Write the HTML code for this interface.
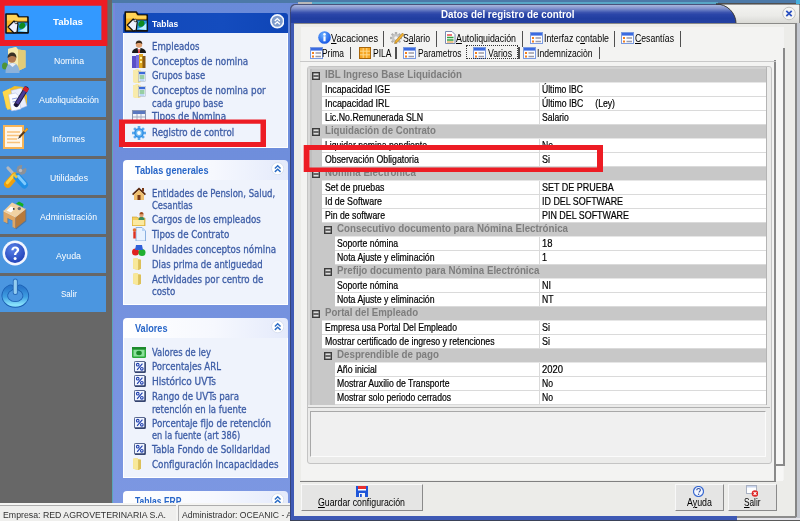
<!DOCTYPE html>
<html lang="es"><head><meta charset="utf-8"><title>Datos del registro de control</title><style>
html,body{margin:0;padding:0;background:#666;}
#root{filter:blur(.6px);position:relative;width:800px;height:521px;overflow:hidden;background:#666;font-family:"Liberation Sans","DejaVu Sans",sans-serif;}
#root div,#root svg{position:absolute;}
.t{position:absolute;white-space:pre;line-height:20px;height:20px;color:#000;transform-origin:0 50%;}
.lk{color:#3d5da6;-webkit-text-stroke:.3px #3d5da6;font-family:"DejaVu Sans","Liberation Sans",sans-serif;}
.sb{color:#fff;}
.st{color:#303030;}
.gr{color:#000;-webkit-text-stroke:.2px #000;}
.cat{color:#7d7d7d;font-weight:bold;}
.pbtn{background:#e6e6e6;border:1px solid;border-color:#f8f8f8 #8a8a8a #8a8a8a #f8f8f8;box-sizing:border-box;}
</style></head><body><div id="root">
<div style="left:0px;top:0px;width:112px;height:504px;background:#676767;"></div>
<div style="left:0px;top:3px;width:106px;height:37px;background:#3399ff;"></div>
<div style="left:0px;top:42px;width:106px;height:36px;background:#4b96e0;"></div>
<div style="left:0px;top:81px;width:106px;height:36px;background:#4b96e0;"></div>
<div style="left:0px;top:120px;width:106px;height:36px;background:#4b96e0;"></div>
<div style="left:0px;top:159px;width:106px;height:36px;background:#4b96e0;"></div>
<div style="left:0px;top:198px;width:106px;height:36px;background:#4b96e0;"></div>
<div style="left:0px;top:237px;width:106px;height:36px;background:#4b96e0;"></div>
<div style="left:0px;top:276px;width:106px;height:36px;background:#4b96e0;"></div>
<svg style="left:4.5px;top:12.5px" width="24" height="21" viewBox="0 0 24 21"><path d="M1 1h11l2 3h9v16H1z" fill="#f8b62a" stroke="#111" stroke-width="1.6" stroke-linejoin="round"/><path d="M2 2h9l1.5 2.5H22v3H2z" fill="#ffd457"/><rect x="12" y="9" width="11" height="10.5" fill="#2a9be0" stroke="#111" stroke-width="1"/><path d="M13 18c3-1 6-2 9-6v7z" fill="#bfefff"/><path d="M14 14c0-3 2-4.5 3.5-4.5S21 11 20 13.5 15 17 14 14z" fill="#0f8a1e"/><path d="M3 14l6-6 4 3-1 8-3 1z" fill="#eef0ff" stroke="#111" stroke-width="1.2" stroke-linejoin="round"/><circle cx="11" cy="9.5" r="1.3" fill="#ddd" stroke="#111" stroke-width=".6"/></svg>
<svg style="left:2px;top:46px" width="26" height="28" viewBox="0 0 26 28"><path d="M6 3l8-2 2 2.500 7.500 1v17l-7.500 3.500L6 22z" fill="#efdc92"/><path d="M6 3l8-2 2 2.500V25L6 22z" fill="#f6eaae"/><path d="M16 3.500l7.500 1v17L16 25z" fill="#e3cc78"/><ellipse cx="2.800" cy="20" rx="2.800" ry="3.600" fill="#4f9436"/><path d="M3.500 27c0-6 2.500-10 7-10s7 4 7 10z" fill="#8db2da"/><path d="M7 18l3.500 3 3.500-3-3.500-1z" fill="#e8eef8"/><circle cx="10" cy="12.500" r="4.200" fill="#b47a52"/><path d="M5.600 12c0-4 2.300-5.500 4.600-5.500s4.600 2 4.200 5.500c-1.500-2.500-5.500-3-8.800 0z" fill="#3a3024"/></svg>
<svg style="left:2px;top:85px" width="28" height="27" viewBox="0 0 28 27"><path d="M1 6.500L9 3l3.500-2 8.500 1 4 9v9L9 25l-5-2z" fill="#f2bd24"/><path d="M.500 7L8 3.500l4 18.500-6.500 3z" fill="#ffd84d"/><path d="M9 5.500l10.500-2.500L25 21l-11.500 4.500z" fill="#e9eefc" stroke="#aab6e2" stroke-width=".5"/><path d="M6.500 9.500l7-1.500 3 2.500L19 24l-9.500 2z" fill="#fbfcff" stroke="#aab6e2" stroke-width=".5"/><path d="M10 14l5-1M10.500 17l5-1M11 20l5-1" stroke="#8fa2e0" stroke-width="1"/><path d="M24 4L14.500 19.500" stroke="#1f1a40" stroke-width="5" stroke-linecap="round"/><path d="M24 4L15 18.500" stroke="#4a3c96" stroke-width="3.200" stroke-linecap="round"/><path d="M25 2.500l-2.200 3.600" stroke="#d41f28" stroke-width="5"/><path d="M13 21.500l.800-3.500 2.800 1.700z" fill="#16122e"/></svg>
<svg style="left:3px;top:125px" width="27" height="25" viewBox="0 0 27 25"><rect x="1" y="1" width="19" height="22" fill="#fff7ea" stroke="#f7b558" stroke-width="2"/><path d="M4 7h13M4 10.500h13M4 14h10M4 17.500h13" stroke="#f9c27a" stroke-width="1.600"/><path d="M24.500 3.500l-8 8.500" stroke="#5a3a1a" stroke-width="2"/><path d="M24.500 3.500l-3 3.200" stroke="#f0a020" stroke-width="2"/><path d="M14.500 14l2-2.500 1 1z" fill="#333"/></svg>
<svg style="left:3px;top:164px" width="26" height="25" viewBox="0 0 26 25"><path d="M16.500 8.500l-3.500 4" stroke="#8f949a" stroke-width="3.400"/><circle cx="18.500" cy="5.800" r="4.900" fill="#8d9197"/><path d="M18.500 5.800l1-6 5 3.500z" fill="#4b96e0"/><circle cx="17.500" cy="6.500" r="1.700" fill="#b9bcc2"/><path d="M11.500 11L5 4" stroke="#b4b8be" stroke-width="3.200" stroke-linecap="round"/><path d="M4.800 20.200l7-8" stroke="#ee9f0c" stroke-width="7.400" stroke-linecap="round"/><path d="M4.300 18.800l6.500-7.500" stroke="#ffcf3f" stroke-width="3" stroke-linecap="round"/><path d="M14.300 13l7 7.800" stroke="#1f8fe6" stroke-width="7.400" stroke-linecap="round"/><path d="M15.300 12.300l6.600 7.400" stroke="#7fcbff" stroke-width="2.800" stroke-linecap="round"/><path d="M10.500 10l3.500 3.500" stroke="#e8c23a" stroke-width="2.500"/></svg>
<svg style="left:3px;top:201px" width="24" height="29" viewBox="0 0 24 29"><path d="M.500 10L9 1.500 22.500 8v11.500L12.500 27.500l-3-1.500V19.500L4.500 17v5.500L.500 20.500z" fill="#4a3a2a" opacity=".35" transform="translate(.8 .8)"/><path d="M.500 10L9 1.500 22.500 8 12.500 16z" fill="#f1d2a3"/><path d="M.500 10l12 6v11.500l-3-1.500V19.500L4.500 17v5.500L.500 20.500z" fill="#dfa664"/><path d="M12.500 16l10-8v11.500l-10 8z" fill="#b77a3c"/><path d="M.500 10l12 6 10-8" fill="none" stroke="#f7e2c0" stroke-width=".8"/><path d="M3.500 9.500L8 5.500l4 2-4 4z" fill="#ffffff"/><path d="M13 2.800L16 .600l4.500 2.400-.500 3-3-1.500z" fill="#12b020"/><circle cx="16.300" cy="7.600" r="1.700" fill="#6a6a70"/><circle cx="10.800" cy="7.900" r=".9" fill="#222"/></svg>
<svg style="left:2px;top:240px" width="26" height="26" viewBox="0 0 26 26"><defs><radialGradient id="ga" cx=".4" cy=".3" r=".8"><stop offset="0" stop-color="#5a82e8"/><stop offset="1" stop-color="#1c3cb4"/></radialGradient></defs><circle cx="13" cy="13" r="12.500" fill="#f2f6ff"/><circle cx="13" cy="13" r="10" fill="url(#ga)"/><path d="M9.300 10.200c0-2.500 1.800-3.800 3.900-3.800 2.300 0 4 1.300 4 3.400 0 2.600-2.900 2.900-2.900 5.300h-2.300c0-3.100 2.700-3.600 2.700-5.200 0-.900-.700-1.400-1.500-1.400-1 0-1.600.700-1.700 1.700z" fill="#fff"/><circle cx="13.100" cy="18.400" r="1.500" fill="#fff"/></svg>
<svg style="left:1px;top:278px" width="30" height="30" viewBox="0 0 30 30"><defs><linearGradient id="gs" x1="0" y1="0" x2="0" y2="1"><stop offset="0" stop-color="#2a78cc"/><stop offset=".55" stop-color="#3f9fe2"/><stop offset="1" stop-color="#86e0fb"/></linearGradient></defs><path d="M9.600 9.800A10.500 8.800 0 1 0 19 9.800" fill="none" stroke="#1b5fb2" stroke-width="6.600" stroke-linecap="round"/><path d="M9.600 9.800A10.500 8.800 0 1 0 19 9.800" fill="none" stroke="url(#gs)" stroke-width="4.800" stroke-linecap="round"/><path d="M14.300 3v11.500" stroke="#2a6cb8" stroke-width="5" stroke-linecap="round"/><path d="M14.300 3v11.500" stroke="#94cdf0" stroke-width="3.200" stroke-linecap="round"/></svg>
<div style="left:112px;top:0px;width:188px;height:504px;background:linear-gradient(180deg,#698ad9 0%,#7c97e2 100%);"></div>
<div style="left:112px;top:0px;width:1px;height:504px;background:#5aa6b8;"></div>
<div style="left:113px;top:0px;width:1.5px;height:504px;background:linear-gradient(180deg,#7a86dc 0%,#7a86dc 40%,#7c97e2 100%);"></div>
<div style="left:112px;top:0px;width:688px;height:2.5px;background:#4c79a8;"></div>
<div style="left:123px;top:12.5px;width:165px;height:20.5px;background:linear-gradient(90deg,#1249ba 0%,#144cbe 60%,#0f45b6 100%);border-radius:3px 3px 0 0"></div>
<div style="left:123px;top:33px;width:165px;height:114.5px;background:#eff3fc;border:1px solid #fff;border-top:none;box-sizing:border-box"></div>
<svg style="left:124.3px;top:10.8px" width="24.5" height="21" viewBox="0 0 24 21"><path d="M1 1h11l2 3h9v16H1z" fill="#f8b62a" stroke="#111" stroke-width="1.6" stroke-linejoin="round"/><path d="M2 2h9l1.5 2.5H22v3H2z" fill="#ffd457"/><rect x="12" y="9" width="11" height="10.5" fill="#2a9be0" stroke="#111" stroke-width="1"/><path d="M13 18c3-1 6-2 9-6v7z" fill="#bfefff"/><path d="M14 14c0-3 2-4.5 3.5-4.5S21 11 20 13.5 15 17 14 14z" fill="#0f8a1e"/><path d="M3 14l6-6 4 3-1 8-3 1z" fill="#eef0ff" stroke="#111" stroke-width="1.2" stroke-linejoin="round"/><circle cx="11" cy="9.5" r="1.3" fill="#ddd" stroke="#111" stroke-width=".6"/></svg>
<svg style="left:269.9px;top:14.2px" width="14.6" height="14.6" viewBox="0 0 16 16"><circle cx="8" cy="8" r="7" fill="#7f9ccc" stroke="#f4f7fd" stroke-width="1.800"/><path d="M5.200 7.600l2.800-2.600 2.800 2.600M5.200 11.200l2.800-2.600 2.800 2.600" fill="none" stroke="#fff" stroke-width="1.500"/></svg>
<div style="left:123px;top:159.5px;width:165px;height:20px;background:linear-gradient(90deg,#ffffff 0%,#f6f8fe 55%,#e4eafb 100%);border-radius:4px 4px 0 0"></div>
<div style="left:123px;top:179.5px;width:165px;height:125px;background:#eff3fc;border:1px solid #fff;border-top:none;box-sizing:border-box"></div>
<svg style="left:270.5px;top:161.8px" width="13.4" height="13.4" viewBox="0 0 16 16"><circle cx="8" cy="8" r="7.300" fill="#fff" stroke="#d3dbec" stroke-width="1"/><path d="M4.600 7.800l3.400-3.200 3.400 3.200M4.600 11.800l3.400-3.200 3.400 3.200" fill="none" stroke="#2a6cc6" stroke-width="1.700"/></svg>
<div style="left:123px;top:318px;width:165px;height:19.5px;background:linear-gradient(90deg,#ffffff 0%,#f6f8fe 55%,#e4eafb 100%);border-radius:4px 4px 0 0"></div>
<div style="left:123px;top:337.5px;width:165px;height:140.5px;background:#eff3fc;border:1px solid #fff;border-top:none;box-sizing:border-box"></div>
<svg style="left:270.5px;top:320.3px" width="13.4" height="13.4" viewBox="0 0 16 16"><circle cx="8" cy="8" r="7.300" fill="#fff" stroke="#d3dbec" stroke-width="1"/><path d="M4.600 7.800l3.400-3.200 3.400 3.200M4.600 11.800l3.400-3.200 3.400 3.200" fill="none" stroke="#2a6cc6" stroke-width="1.700"/></svg>
<div style="left:123px;top:491px;width:165px;height:19.5px;background:linear-gradient(90deg,#ffffff 0%,#f6f8fe 55%,#e4eafb 100%);border-radius:4px 4px 0 0"></div>
<svg style="left:270.5px;top:493.3px" width="13.4" height="13.4" viewBox="0 0 16 16"><circle cx="8" cy="8" r="7.300" fill="#fff" stroke="#d3dbec" stroke-width="1"/><path d="M4.600 7.800l3.400-3.200 3.400 3.200M4.600 11.800l3.400-3.200 3.400 3.200" fill="none" stroke="#2a6cc6" stroke-width="1.700"/></svg>
<svg style="left:131.5px;top:39.5px" width="14" height="13" viewBox="0 0 14 13"><path d="M0 13c0-3.500 3-5 7-5s7 1.500 7 5z" fill="#1a1a1a"/><path d="M5.500 8h3l-1 5h-1z" fill="#fff"/><path d="M6.500 9h1l.400 4h-1.800z" fill="#d22"/><circle cx="7" cy="4.500" r="3.200" fill="#e0a070"/><path d="M3.700 4c0-2.500 1.500-3.500 3.300-3.500S10.300 1.500 10.300 4c-1.500-1.500-5-1.500-6.600 0z" fill="#3a2a1a"/></svg>
<svg style="left:132px;top:54px" width="14" height="14" viewBox="0 0 14 14"><rect x="0" y="2" width="4" height="12" fill="#5a50c8"/><rect x="4" y="1" width="3" height="13" fill="#7a70e0"/><rect x="7" y="0" width="4" height="14" fill="#e0a820"/><rect x="10.500" y="2" width="3" height="12" fill="#8a5a14"/><rect x="8" y="3" width="2" height="2" fill="#fff2a0"/><rect x="8" y="7" width="2" height="2" fill="#fff2a0"/></svg>
<svg style="left:133px;top:68.5px" width="13" height="14.5" viewBox="0 0 13 14.5"><path d="M0 1.500l5-1.500 1 1.500h2V13l-3 1.500L0 13z" fill="#f2dc86"/><path d="M0 1.500l5-1.500V14.500L0 13z" fill="#f8ebac"/><rect x="5.500" y="2.500" width="7" height="10" fill="#fbfdff" stroke="#9aa6b8" stroke-width=".5"/><rect x="6" y="3" width="6" height="2.300" fill="#3a6ad8"/><path d="M6.500 7h5M6.500 9h5" stroke="#35a04a" stroke-width="1.100"/><path d="M6.500 11h5" stroke="#7ab0e8" stroke-width="1"/></svg>
<svg style="left:133px;top:83.5px" width="13" height="14.5" viewBox="0 0 13 14.5"><path d="M0 1.500l5-1.500 1 1.500h2V13l-3 1.500L0 13z" fill="#f2dc86"/><path d="M0 1.500l5-1.500V14.500L0 13z" fill="#f8ebac"/><rect x="5.500" y="2.500" width="7" height="10" fill="#fbfdff" stroke="#9aa6b8" stroke-width=".5"/><rect x="6" y="3" width="6" height="2.300" fill="#3a6ad8"/><path d="M6.500 7h5M6.500 9h5" stroke="#35a04a" stroke-width="1.100"/><path d="M6.500 11h5" stroke="#7ab0e8" stroke-width="1"/></svg>
<svg style="left:132px;top:110px" width="14" height="12" viewBox="0 0 14 12"><rect x=".5" y=".5" width="13" height="11" fill="#f4f6fa" stroke="#8a96b0" stroke-width="1"/><rect x="1" y="1" width="12" height="3" fill="#5a78c0"/><path d="M1 7h12M5 4v8M9 4v8" stroke="#a0aac0" stroke-width="1"/></svg>
<svg style="left:131.5px;top:125.5px" width="14" height="14" viewBox="0 0 14 14"><g transform="translate(7 7)"><g fill="#58a8ee"><rect x="-1.300" y="-7" width="2.600" height="4" transform="rotate(0)"/><rect x="-1.300" y="-7" width="2.600" height="4" transform="rotate(45)"/><rect x="-1.300" y="-7" width="2.600" height="4" transform="rotate(90)"/><rect x="-1.300" y="-7" width="2.600" height="4" transform="rotate(135)"/><rect x="-1.300" y="-7" width="2.600" height="4" transform="rotate(180)"/><rect x="-1.300" y="-7" width="2.600" height="4" transform="rotate(225)"/><rect x="-1.300" y="-7" width="2.600" height="4" transform="rotate(270)"/><rect x="-1.300" y="-7" width="2.600" height="4" transform="rotate(315)"/></g><circle r="4.800" fill="#2f8ee4"/><circle r="3.400" fill="#6cb8f2"/><circle r="1.900" fill="#ffffff"/></g></svg>
<svg style="left:132px;top:186.5px" width="14" height="13" viewBox="0 0 14 13"><path d="M0 7l7-6.500L14 7l-1.200 1.200L7 3 1.200 8.200z" fill="#5a2a10"/><path d="M2 7.500l5-4.500 5 4.500V13H2z" fill="#f0c070"/><rect x="5.500" y="8" width="3" height="5" fill="#7a3a16"/><rect x="10" y="1" width="2" height="3.500" fill="#7a3a16"/></svg>
<svg style="left:132px;top:211.5px" width="14" height="14" viewBox="0 0 14 14"><path d="M0 5h5l1 1h7v8H0z" fill="#f4cf5e" stroke="#c79a28" stroke-width=".6"/><path d="M1 8h11v5H1z" fill="#fbe9a0"/><circle cx="9.500" cy="3" r="2.200" fill="#e0a070"/><path d="M6.500 8c0-2.500 1.500-3 3-3s3 .5 3 3z" fill="#3a8a5a"/><path d="M7.500 2.300c0-1.500 1-2.300 2-2.300s2 .8 2 2.300z" fill="#a04a1a"/></svg>
<svg style="left:132px;top:226.5px" width="14" height="14.5" viewBox="0 0 14 14.5"><path d="M4 .5h6l3.500 3.500v10H4z" fill="#e8f2ff" stroke="#8ab0e0" stroke-width="1"/><path d="M10 .5V4h3.500z" fill="#b8d4f4"/><circle cx="2.500" cy="3" r="1.800" fill="#e07030"/><rect x="1.300" y="4.500" width="2.400" height="7" fill="#e03020"/></svg>
<svg style="left:132px;top:243.5px" width="14" height="12" viewBox="0 0 14 12"><circle cx="3.500" cy="8" r="3.500" fill="#e02020"/><circle cx="10" cy="8.500" r="3.500" fill="#20b030"/><path d="M4 1h6l1 5H3z" fill="#3060d8"/></svg>
<svg style="left:132px;top:257.5px" width="10.5" height="12.5" viewBox="0 0 12 15"><path d="M1 1l5-1 1 1.500 3.500.500V13l-3.500 1.500L1 13z" fill="#f0d878"/><path d="M7 1.500l3.500.500V13L7 14.500z" fill="#dcc05a"/><path d="M1 1l5-1 1 1.500V14L1 13z" fill="#f8e89a"/></svg>
<svg style="left:132px;top:272.5px" width="10.5" height="12.5" viewBox="0 0 12 15"><path d="M1 1l5-1 1 1.500 3.500.500V13l-3.500 1.500L1 13z" fill="#f0d878"/><path d="M7 1.500l3.500.500V13L7 14.500z" fill="#dcc05a"/><path d="M1 1l5-1 1 1.500V14L1 13z" fill="#f8e89a"/></svg>
<svg style="left:132px;top:346.5px" width="14" height="11" viewBox="0 0 14 11"><rect x="0" y="1" width="14" height="10" rx="1.500" fill="#2aa83a"/><rect x="1.500" y="2.500" width="11" height="7" fill="#8ae09a"/><ellipse cx="7" cy="6" rx="2.800" ry="2.200" fill="#1a8a2a"/><rect x="0" y="0" width="14" height="2.500" fill="#1d8a2c"/></svg>
<svg style="left:133.5px;top:360.8px" width="12" height="12" viewBox="0 0 13.500 13.500"><rect x=".5" y=".5" width="12" height="12" rx="1" fill="#f2f6ff" stroke="#3a4a7a" stroke-width="1"/><path d="M1 12.500h11.500V1" stroke="#1a2a5a" stroke-width="1.200" fill="none"/><circle cx="4.200" cy="4.200" r="1.500" fill="none" stroke="#2040b0" stroke-width="1.200"/><circle cx="8.800" cy="8.800" r="1.500" fill="none" stroke="#2040b0" stroke-width="1.200"/><path d="M9.500 3l-6 7" stroke="#2040b0" stroke-width="1.300"/></svg>
<svg style="left:133.5px;top:375.3px" width="12" height="12" viewBox="0 0 13.500 13.500"><rect x=".5" y=".5" width="12" height="12" rx="1" fill="#f2f6ff" stroke="#3a4a7a" stroke-width="1"/><path d="M1 12.500h11.500V1" stroke="#1a2a5a" stroke-width="1.200" fill="none"/><circle cx="4.200" cy="4.200" r="1.500" fill="none" stroke="#2040b0" stroke-width="1.200"/><circle cx="8.800" cy="8.800" r="1.500" fill="none" stroke="#2040b0" stroke-width="1.200"/><path d="M9.500 3l-6 7" stroke="#2040b0" stroke-width="1.300"/></svg>
<svg style="left:133.5px;top:389.8px" width="12" height="12" viewBox="0 0 13.500 13.500"><rect x=".5" y=".5" width="12" height="12" rx="1" fill="#f2f6ff" stroke="#3a4a7a" stroke-width="1"/><path d="M1 12.500h11.500V1" stroke="#1a2a5a" stroke-width="1.200" fill="none"/><circle cx="4.200" cy="4.200" r="1.500" fill="none" stroke="#2040b0" stroke-width="1.200"/><circle cx="8.800" cy="8.800" r="1.500" fill="none" stroke="#2040b0" stroke-width="1.200"/><path d="M9.500 3l-6 7" stroke="#2040b0" stroke-width="1.300"/></svg>
<svg style="left:133.5px;top:416.5px" width="12" height="12" viewBox="0 0 13.500 13.500"><rect x=".5" y=".5" width="12" height="12" rx="1" fill="#f2f6ff" stroke="#3a4a7a" stroke-width="1"/><path d="M1 12.500h11.500V1" stroke="#1a2a5a" stroke-width="1.200" fill="none"/><circle cx="4.200" cy="4.200" r="1.500" fill="none" stroke="#2040b0" stroke-width="1.200"/><circle cx="8.800" cy="8.800" r="1.500" fill="none" stroke="#2040b0" stroke-width="1.200"/><path d="M9.500 3l-6 7" stroke="#2040b0" stroke-width="1.300"/></svg>
<svg style="left:133.5px;top:442.8px" width="12" height="12" viewBox="0 0 13.500 13.500"><rect x=".5" y=".5" width="12" height="12" rx="1" fill="#f2f6ff" stroke="#3a4a7a" stroke-width="1"/><path d="M1 12.500h11.500V1" stroke="#1a2a5a" stroke-width="1.200" fill="none"/><circle cx="4.200" cy="4.200" r="1.500" fill="none" stroke="#2040b0" stroke-width="1.200"/><circle cx="8.800" cy="8.800" r="1.500" fill="none" stroke="#2040b0" stroke-width="1.200"/><path d="M9.500 3l-6 7" stroke="#2040b0" stroke-width="1.300"/></svg>
<svg style="left:132px;top:457.5px" width="10.5" height="12.5" viewBox="0 0 12 15"><path d="M1 1l5-1 1 1.500 3.500.500V13l-3.500 1.500L1 13z" fill="#f0d878"/><path d="M7 1.500l3.500.500V13L7 14.500z" fill="#dcc05a"/><path d="M1 1l5-1 1 1.500V14L1 13z" fill="#f8e89a"/></svg>
<span class="t sb" id="t52" style="left:53px;top:12px;font-size:9.5px;transform:scaleX(1.021);font-weight:bold;">Tablas</span>
<span class="t sb" id="t53" style="left:54px;top:51px;font-size:9.5px;transform:scaleX(0.916);">Nomina</span>
<span class="t sb" id="t54" style="left:39px;top:90px;font-size:9.5px;transform:scaleX(0.931);">Autoliquidación</span>
<span class="t sb" id="t55" style="left:52px;top:129px;font-size:9.5px;transform:scaleX(0.893);">Informes</span>
<span class="t sb" id="t56" style="left:50px;top:168px;font-size:9.5px;transform:scaleX(0.911);">Utilidades</span>
<span class="t sb" id="t57" style="left:40px;top:207px;font-size:9.5px;transform:scaleX(0.915);">Administración</span>
<span class="t sb" id="t58" style="left:56px;top:245.5px;font-size:9.5px;transform:scaleX(0.934);">Ayuda</span>
<span class="t sb" id="t59" style="left:61px;top:284px;font-size:9.5px;transform:scaleX(0.841);">Salir</span>
<span class="t sb" id="t60" style="left:151.5px;top:13.5px;font-size:9.5px;transform:scaleX(0.895);font-weight:bold;">Tablas</span>
<span class="t lk" id="t61" style="left:151.8px;top:36.9px;font-size:10px;transform:scaleX(0.859);">Empleados</span>
<span class="t lk" id="t62" style="left:151.8px;top:51.9px;font-size:10px;transform:scaleX(0.883);">Conceptos de nomina</span>
<span class="t lk" id="t63" style="left:151.8px;top:66.4px;font-size:10px;transform:scaleX(0.846);">Grupos base</span>
<span class="t lk" id="t64" style="left:151.8px;top:81.4px;font-size:10px;transform:scaleX(0.883);">Conceptos de nomina por</span>
<span class="t lk" id="t65" style="left:151.8px;top:93.9px;font-size:10px;transform:scaleX(0.852);">cada grupo base</span>
<span class="t lk" id="t66" style="left:151.8px;top:107.4px;font-size:10px;transform:scaleX(0.886);">Tipos de Nomina</span>
<span class="t lk" id="t67" style="left:151.8px;top:122.7px;font-size:10px;transform:scaleX(0.870);">Registro de control</span>
<span class="t lk" id="t68" style="left:151.8px;top:183.9px;font-size:10px;transform:scaleX(0.853);">Entidades de Pension, Salud,</span>
<span class="t lk" id="t69" style="left:151.8px;top:196.4px;font-size:10px;transform:scaleX(0.833);">Cesantias</span>
<span class="t lk" id="t70" style="left:151.8px;top:209.9px;font-size:10px;transform:scaleX(0.864);">Cargos de los empleados</span>
<span class="t lk" id="t71" style="left:151.8px;top:224.9px;font-size:10px;transform:scaleX(0.870);">Tipos de Contrato</span>
<span class="t lk" id="t72" style="left:151.8px;top:239.9px;font-size:10px;transform:scaleX(0.876);">Unidades conceptos nómina</span>
<span class="t lk" id="t73" style="left:151.8px;top:254.7px;font-size:10px;transform:scaleX(0.853);">Dias prima de antiguedad</span>
<span class="t lk" id="t74" style="left:151.8px;top:269.9px;font-size:10px;transform:scaleX(0.867);">Actividades por centro de</span>
<span class="t lk" id="t75" style="left:151.8px;top:282.4px;font-size:10px;transform:scaleX(0.863);">costo</span>
<span class="t lk" id="t76" style="left:151.8px;top:342.9px;font-size:10px;transform:scaleX(0.842);">Valores de ley</span>
<span class="t lk" id="t77" style="left:151.8px;top:357.4px;font-size:10px;transform:scaleX(0.858);">Porcentajes ARL</span>
<span class="t lk" id="t78" style="left:151.8px;top:371.9px;font-size:10px;transform:scaleX(0.901);">Histórico UVTs</span>
<span class="t lk" id="t79" style="left:151.8px;top:386.9px;font-size:10px;transform:scaleX(0.868);">Rango de UVTs para</span>
<span class="t lk" id="t80" style="left:151.8px;top:399.7px;font-size:10px;transform:scaleX(0.855);">retención en la fuente</span>
<span class="t lk" id="t81" style="left:151.8px;top:413.9px;font-size:10px;transform:scaleX(0.868);">Porcentaje fijo de retención</span>
<span class="t lk" id="t82" style="left:151.8px;top:425.9px;font-size:10px;transform:scaleX(0.820);">en la fuente (art 386)</span>
<span class="t lk" id="t83" style="left:151.8px;top:439.7px;font-size:10px;transform:scaleX(0.879);">Tabla Fondo de Solidaridad</span>
<span class="t lk" id="t84" style="left:151.8px;top:454.7px;font-size:10px;transform:scaleX(0.876);">Configuración Incapacidades</span>
<span class="t lk" id="t85" style="left:134.5px;top:160.8px;font-size:10px;transform:scaleX(0.914);color:#2866c8;font-weight:bold;-webkit-text-stroke:0;font-family:'Liberation Sans',sans-serif;">Tablas generales</span>
<span class="t lk" id="t86" style="left:134.5px;top:319px;font-size:10px;transform:scaleX(0.913);color:#2866c8;font-weight:bold;-webkit-text-stroke:0;font-family:'Liberation Sans',sans-serif;">Valores</span>
<span class="t lk" id="t87" style="left:134.5px;top:492px;font-size:10px;transform:scaleX(0.857);color:#2866c8;font-weight:bold;-webkit-text-stroke:0;font-family:'Liberation Sans',sans-serif;">Tablas ERP</span>
<div style="left:0px;top:503.3px;width:290px;height:17.7px;background:#f5f5f3;"></div>
<div style="left:0px;top:505px;width:175.5px;height:16px;background:#efefed;border-top:1px solid #adadad;box-sizing:border-box"></div>
<div style="left:178.2px;top:505px;width:112px;height:16px;background:#efefed;border-top:1px solid #adadad;border-left:1px solid #adadad;box-sizing:border-box"></div>
<span class="t st" id="t91" style="left:3px;top:505.2px;font-size:9.7px;transform:scaleX(0.904);">Empresa: RED AGROVETERINARIA S.A.</span>
<span class="t st" id="t92" style="left:181.5px;top:505.2px;font-size:9.7px;transform:scaleX(0.888);">Administrador: OCEANIC - A</span>
<div style="left:298px;top:2px;width:13.5px;height:2px;background:#b8b8b8;"></div>
<div style="left:311.5px;top:2px;width:406px;height:2px;background:#58a6c6;"></div>
<div style="left:290px;top:3.7px;width:447px;height:517.8px;background:#4a527a;border-radius:5px 0 0 0"></div>
<div style="left:290px;top:12px;width:447px;height:509.5px;background:#35457e;"></div>
<div style="left:291.3px;top:14px;width:3.1px;height:505.6px;background:#3e59b4;"></div>
<div style="left:291.3px;top:516.4px;width:445.7px;height:3.2px;background:#3e59b4;"></div>
<div style="left:290px;top:519.6px;width:447px;height:2px;background:#3a4258;"></div>
<div style="left:737px;top:515.7px;width:63px;height:2px;background:#8c8c8c;"></div>
<div style="left:737px;top:517.6px;width:63px;height:2px;background:#e4e4ea;"></div>
<div style="left:737px;top:519.6px;width:63px;height:2px;background:#5a5a5a;"></div>
<div style="left:291px;top:4.5px;width:445px;height:18px;background:linear-gradient(180deg,#aab7de 0%,#8292cd 19%,#5c72be 31%,#3b53af 42%,#2a45a8 53%,#213ea0 75%,#2340a2 100%);border-radius:5px 0 0 0"></div>
<svg style="left:706px;top:2.500px" width="94" height="21" viewBox="0 0 94 21"><defs><linearGradient id="gt" x1="0" y1="0" x2="0" y2="1"><stop offset="0" stop-color="#f4f4f2"/><stop offset=".6" stop-color="#ebebe8"/><stop offset="1" stop-color="#d8d8d4"/></linearGradient></defs><path d="M10 1A20 19.500 0 0 1 30 20.500H94V1z" fill="url(#gt)" stroke="#3a3a3a" stroke-width="1"/><circle cx="83" cy="10.500" r="6.300" fill="#f6f6f4" stroke="#c4c4c0" stroke-width="1"/><path d="M80.300 7.800l5.400 5.400M85.700 7.800l-5.400 5.400" stroke="#2a50c0" stroke-width="1.700"/></svg>
<div style="left:795.5px;top:0px;width:4.5px;height:3.5px;background:#45b0dd;"></div>
<div style="left:294.3px;top:22.5px;width:501.7px;height:493.2px;background:#ecece9;"></div>
<div style="left:796px;top:23px;width:4px;height:494.6px;background:#c3c7cf;"></div>
<div style="left:795px;top:23px;width:2.2px;height:494px;background:#858585;"></div>
<div style="left:294.3px;top:22.5px;width:501px;height:1px;background:#8a8a88;"></div>
<div style="left:300.5px;top:27px;width:483.5px;height:453px;background:#f3f3f2;"></div>
<div style="left:782.9px;top:48px;width:1.8px;height:417px;background:#8a8a8a;"></div>
<div style="left:774.3px;top:59.5px;width:1.8px;height:422.5px;background:#8a8a8a;"></div>
<div style="left:776.1px;top:59.5px;width:6.8px;height:421px;background:#f7f7f6;"></div>
<div style="left:776px;top:464px;width:8.7px;height:1.6px;background:#8a8a8a;"></div>
<div style="left:300px;top:480.5px;width:476px;height:1.5px;background:#808080;"></div>
<div style="left:300px;top:61px;width:476px;height:1px;background:#c8c8c8;"></div>
<div style="left:306.5px;top:66px;width:465.5px;height:398px;background:#ebebea;border:1px solid #c4c4c4;border-radius:3px;box-sizing:border-box"></div>
<div style="left:307.5px;top:67px;width:458.5px;height:338px;background:#c8c8c8;"></div>
<div style="left:307.5px;top:67px;width:2.5px;height:338px;background:#d8d8d8;"></div>
<div style="left:310px;top:67px;width:2px;height:338px;background:#bebebe;"></div>
<div style="left:307.5px;top:67px;width:459px;height:1.5px;background:#d2d2d2;"></div>
<div style="left:765.8px;top:67px;width:1.2px;height:338px;background:#b4b4b4;"></div>
<div style="left:322px;top:82px;width:444px;height:1px;background:#e6e6e6;"></div>
<svg style="left:312px;top:71.7px" width="8" height="8" viewBox="0 0 8 8"><rect x=".7" y=".7" width="6.600" height="6.600" fill="#dcdcdc" stroke="#3c3c3c" stroke-width="1.400"/><path d="M1.400 4h5.200" stroke="#2a2a2a" stroke-width="1.300"/></svg>
<div style="left:322px;top:83px;width:444px;height:14px;background:#dadada;"></div>
<div style="left:322px;top:83px;width:217.2px;height:13px;background:#fff;"></div>
<div style="left:540.3px;top:83px;width:225.7px;height:13px;background:#fff;"></div>
<div style="left:322px;top:97px;width:444px;height:14px;background:#dadada;"></div>
<div style="left:322px;top:97px;width:217.2px;height:13px;background:#fff;"></div>
<div style="left:540.3px;top:97px;width:225.7px;height:13px;background:#fff;"></div>
<div style="left:322px;top:111px;width:444px;height:14px;background:#dadada;"></div>
<div style="left:322px;top:111px;width:217.2px;height:13px;background:#fff;"></div>
<div style="left:540.3px;top:111px;width:225.7px;height:13px;background:#fff;"></div>
<div style="left:322px;top:138px;width:444px;height:1px;background:#e6e6e6;"></div>
<svg style="left:312px;top:127.7px" width="8" height="8" viewBox="0 0 8 8"><rect x=".7" y=".7" width="6.600" height="6.600" fill="#dcdcdc" stroke="#3c3c3c" stroke-width="1.400"/><path d="M1.400 4h5.200" stroke="#2a2a2a" stroke-width="1.300"/></svg>
<div style="left:322px;top:139px;width:444px;height:14px;background:#dadada;"></div>
<div style="left:322px;top:139px;width:217.2px;height:13px;background:#fff;"></div>
<div style="left:540.3px;top:139px;width:225.7px;height:13px;background:#fff;"></div>
<div style="left:322px;top:153px;width:444px;height:14px;background:#dadada;"></div>
<div style="left:322px;top:153px;width:217.2px;height:13px;background:#fff;"></div>
<div style="left:540.3px;top:153px;width:225.7px;height:13px;background:#fff;"></div>
<div style="left:322px;top:180px;width:444px;height:1px;background:#e6e6e6;"></div>
<svg style="left:312px;top:169.7px" width="8" height="8" viewBox="0 0 8 8"><rect x=".7" y=".7" width="6.600" height="6.600" fill="#dcdcdc" stroke="#3c3c3c" stroke-width="1.400"/><path d="M1.400 4h5.200" stroke="#2a2a2a" stroke-width="1.300"/></svg>
<div style="left:322px;top:181px;width:444px;height:14px;background:#dadada;"></div>
<div style="left:322px;top:181px;width:217.2px;height:13px;background:#fff;"></div>
<div style="left:540.3px;top:181px;width:225.7px;height:13px;background:#fff;"></div>
<div style="left:322px;top:195px;width:444px;height:14px;background:#dadada;"></div>
<div style="left:322px;top:195px;width:217.2px;height:13px;background:#fff;"></div>
<div style="left:540.3px;top:195px;width:225.7px;height:13px;background:#fff;"></div>
<div style="left:322px;top:209px;width:444px;height:14px;background:#dadada;"></div>
<div style="left:322px;top:209px;width:217.2px;height:13px;background:#fff;"></div>
<div style="left:540.3px;top:209px;width:225.7px;height:13px;background:#fff;"></div>
<div style="left:334.5px;top:236px;width:431.5px;height:1px;background:#e6e6e6;"></div>
<svg style="left:324px;top:225.7px" width="8" height="8" viewBox="0 0 8 8"><rect x=".7" y=".7" width="6.600" height="6.600" fill="#dcdcdc" stroke="#3c3c3c" stroke-width="1.400"/><path d="M1.400 4h5.200" stroke="#2a2a2a" stroke-width="1.300"/></svg>
<div style="left:334.5px;top:237px;width:431.5px;height:14px;background:#dadada;"></div>
<div style="left:334.5px;top:237px;width:204.7px;height:13px;background:#fff;"></div>
<div style="left:540.3px;top:237px;width:225.7px;height:13px;background:#fff;"></div>
<div style="left:334.5px;top:251px;width:431.5px;height:14px;background:#dadada;"></div>
<div style="left:334.5px;top:251px;width:204.7px;height:13px;background:#fff;"></div>
<div style="left:540.3px;top:251px;width:225.7px;height:13px;background:#fff;"></div>
<div style="left:334.5px;top:278px;width:431.5px;height:1px;background:#e6e6e6;"></div>
<svg style="left:324px;top:267.7px" width="8" height="8" viewBox="0 0 8 8"><rect x=".7" y=".7" width="6.600" height="6.600" fill="#dcdcdc" stroke="#3c3c3c" stroke-width="1.400"/><path d="M1.400 4h5.200" stroke="#2a2a2a" stroke-width="1.300"/></svg>
<div style="left:334.5px;top:279px;width:431.5px;height:14px;background:#dadada;"></div>
<div style="left:334.5px;top:279px;width:204.7px;height:13px;background:#fff;"></div>
<div style="left:540.3px;top:279px;width:225.7px;height:13px;background:#fff;"></div>
<div style="left:334.5px;top:293px;width:431.5px;height:14px;background:#dadada;"></div>
<div style="left:334.5px;top:293px;width:204.7px;height:13px;background:#fff;"></div>
<div style="left:540.3px;top:293px;width:225.7px;height:13px;background:#fff;"></div>
<div style="left:322px;top:320px;width:444px;height:1px;background:#e6e6e6;"></div>
<svg style="left:312px;top:309.7px" width="8" height="8" viewBox="0 0 8 8"><rect x=".7" y=".7" width="6.600" height="6.600" fill="#dcdcdc" stroke="#3c3c3c" stroke-width="1.400"/><path d="M1.400 4h5.200" stroke="#2a2a2a" stroke-width="1.300"/></svg>
<div style="left:322px;top:321px;width:444px;height:14px;background:#dadada;"></div>
<div style="left:322px;top:321px;width:217.2px;height:13px;background:#fff;"></div>
<div style="left:540.3px;top:321px;width:225.7px;height:13px;background:#fff;"></div>
<div style="left:322px;top:335px;width:444px;height:14px;background:#dadada;"></div>
<div style="left:322px;top:335px;width:217.2px;height:13px;background:#fff;"></div>
<div style="left:540.3px;top:335px;width:225.7px;height:13px;background:#fff;"></div>
<div style="left:334.5px;top:362px;width:431.5px;height:1px;background:#e6e6e6;"></div>
<svg style="left:324px;top:351.7px" width="8" height="8" viewBox="0 0 8 8"><rect x=".7" y=".7" width="6.600" height="6.600" fill="#dcdcdc" stroke="#3c3c3c" stroke-width="1.400"/><path d="M1.400 4h5.200" stroke="#2a2a2a" stroke-width="1.300"/></svg>
<div style="left:334.5px;top:363px;width:431.5px;height:14px;background:#dadada;"></div>
<div style="left:334.5px;top:363px;width:204.7px;height:13px;background:#fff;"></div>
<div style="left:540.3px;top:363px;width:225.7px;height:13px;background:#fff;"></div>
<div style="left:334.5px;top:377px;width:431.5px;height:14px;background:#dadada;"></div>
<div style="left:334.5px;top:377px;width:204.7px;height:13px;background:#fff;"></div>
<div style="left:540.3px;top:377px;width:225.7px;height:13px;background:#fff;"></div>
<div style="left:334.5px;top:391px;width:431.5px;height:14px;background:#dadada;"></div>
<div style="left:334.5px;top:391px;width:204.7px;height:13px;background:#fff;"></div>
<div style="left:540.3px;top:391px;width:225.7px;height:13px;background:#fff;"></div>
<div style="left:310px;top:411px;width:456px;height:46px;background:#f0f0f0;border:1px solid;border-color:#a8a8a8 #fbfbfb #fbfbfb #a8a8a8;box-sizing:border-box"></div>
<div style="left:308px;top:406.5px;width:462px;height:1.2px;background:#b0b0b0;"></div>
<div style="left:382.5px;top:30.5px;width:1.6px;height:16px;background:#505050;"></div>
<div style="left:435.5px;top:30.5px;width:1.6px;height:16px;background:#505050;"></div>
<div style="left:521.5px;top:30.5px;width:1.6px;height:16px;background:#505050;"></div>
<div style="left:613.5px;top:30.5px;width:1.6px;height:16px;background:#505050;"></div>
<div style="left:679.5px;top:30.5px;width:1.6px;height:16px;background:#505050;"></div>
<div style="left:349.5px;top:47px;width:1.6px;height:12px;background:#505050;"></div>
<div style="left:395px;top:47px;width:1.6px;height:12px;background:#505050;"></div>
<div style="left:518px;top:47px;width:1.6px;height:12px;background:#505050;"></div>
<div style="left:598.5px;top:47px;width:1.6px;height:12px;background:#505050;"></div>
<svg style="left:317.5px;top:31px" width="13" height="13" viewBox="0 0 13 13"><defs><radialGradient id="gi" cx=".4" cy=".3" r=".8"><stop offset="0" stop-color="#6ab0ff"/><stop offset="1" stop-color="#0a4ae0"/></radialGradient></defs><circle cx="6.500" cy="6.500" r="6.300" fill="url(#gi)"/><rect x="5.400" y="5.300" width="2.200" height="5" fill="#fff"/><circle cx="6.500" cy="3.400" r="1.300" fill="#fff"/></svg>
<svg style="left:390px;top:30.5px" width="14.5" height="14" viewBox="0 0 14.5 14"><g transform="translate(6 7)"><g fill="#b0b0b0"><rect x="-1.200" y="-6" width="2.400" height="3.500" transform="rotate(0)"/><rect x="-1.200" y="-6" width="2.400" height="3.500" transform="rotate(45)"/><rect x="-1.200" y="-6" width="2.400" height="3.500" transform="rotate(90)"/><rect x="-1.200" y="-6" width="2.400" height="3.500" transform="rotate(135)"/><rect x="-1.200" y="-6" width="2.400" height="3.500" transform="rotate(180)"/><rect x="-1.200" y="-6" width="2.400" height="3.500" transform="rotate(225)"/><rect x="-1.200" y="-6" width="2.400" height="3.500" transform="rotate(270)"/><rect x="-1.200" y="-6" width="2.400" height="3.500" transform="rotate(315)"/></g><circle r="4" fill="#c4c4c4"/><circle r="1.800" fill="#f2f2f2"/></g><path d="M12.500 2l1.500 1.500-7 8-2.500 1 .800-2.500z" fill="#f0b030" stroke="#a07010" stroke-width=".5"/></svg>
<svg style="left:445px;top:31px" width="10.5" height="13" viewBox="0 0 10.5 13"><path d="M.5 .5h6.500l3 3V12.500H.5z" fill="#fff" stroke="#7a8ab0" stroke-width="1"/><path d="M2 4h5" stroke="#e03030" stroke-width="1.300"/><path d="M2 6.500h6.500M2 9h6.500" stroke="#30a040" stroke-width="1.300"/><path d="M2 11h6.500" stroke="#e08a20" stroke-width="1"/></svg>
<svg style="left:530px;top:31.5px" width="13" height="12" viewBox="0 0 13 12"><rect x=".5" y=".5" width="12" height="11" fill="#fdfdff" stroke="#7a9ae0" stroke-width="1"/><rect x="1" y="1" width="11" height="2.600" fill="#3a6ae0"/><rect x="2" y="5" width="2" height="2" fill="#f08020"/><rect x="2" y="8.500" width="2" height="2" fill="#f08020"/><path d="M5.500 6h5.500M5.500 9.500h5.500" stroke="#9a9aa8" stroke-width="1.300"/></svg>
<svg style="left:620.5px;top:31.5px" width="13" height="12" viewBox="0 0 13 12"><rect x=".5" y=".5" width="12" height="11" fill="#fdfdff" stroke="#7a9ae0" stroke-width="1"/><rect x="1" y="1" width="11" height="2.600" fill="#3a6ae0"/><rect x="2" y="5" width="2" height="2" fill="#f08020"/><rect x="2" y="8.500" width="2" height="2" fill="#f08020"/><path d="M5.500 6h5.500M5.500 9.500h5.500" stroke="#9a9aa8" stroke-width="1.300"/></svg>
<svg style="left:309.5px;top:47px" width="13" height="12" viewBox="0 0 13 12"><rect x=".5" y=".5" width="12" height="11" fill="#fdfdff" stroke="#7a9ae0" stroke-width="1"/><rect x="1" y="1" width="11" height="2.600" fill="#3a6ae0"/><rect x="2" y="5" width="2" height="2" fill="#f08020"/><rect x="2" y="8.500" width="2" height="2" fill="#f08020"/><path d="M5.500 6h5.500M5.500 9.500h5.500" stroke="#9a9aa8" stroke-width="1.300"/></svg>
<svg style="left:359px;top:47px" width="12" height="12" viewBox="0 0 12 12"><rect x=".5" y=".5" width="11" height="11" fill="#f6a623" stroke="#a8660a" stroke-width="1"/><path d="M4.200 1v10M7.800 1v10M1 4.200h10M1 7.800h10" stroke="#ffd98a" stroke-width="1"/></svg>
<svg style="left:403px;top:47px" width="13" height="12" viewBox="0 0 13 12"><rect x=".5" y=".5" width="12" height="11" fill="#fdfdff" stroke="#7a9ae0" stroke-width="1"/><rect x="1" y="1" width="11" height="2.600" fill="#3a6ae0"/><rect x="2" y="5" width="2" height="2" fill="#f08020"/><rect x="2" y="8.500" width="2" height="2" fill="#f08020"/><path d="M5.500 6h5.500M5.500 9.500h5.500" stroke="#9a9aa8" stroke-width="1.300"/></svg>
<svg style="left:473px;top:47px" width="13" height="12" viewBox="0 0 13 12"><rect x=".5" y=".5" width="12" height="11" fill="#fdfdff" stroke="#7a9ae0" stroke-width="1"/><rect x="1" y="1" width="11" height="2.600" fill="#3a6ae0"/><rect x="2" y="5" width="2" height="2" fill="#f08020"/><rect x="2" y="8.500" width="2" height="2" fill="#f08020"/><path d="M5.500 6h5.500M5.500 9.500h5.500" stroke="#9a9aa8" stroke-width="1.300"/></svg>
<svg style="left:523px;top:47px" width="13" height="12" viewBox="0 0 13 12"><rect x=".5" y=".5" width="12" height="11" fill="#fdfdff" stroke="#7a9ae0" stroke-width="1"/><rect x="1" y="1" width="11" height="2.600" fill="#3a6ae0"/><rect x="2" y="5" width="2" height="2" fill="#f08020"/><rect x="2" y="8.500" width="2" height="2" fill="#f08020"/><path d="M5.500 6h5.500M5.500 9.500h5.500" stroke="#9a9aa8" stroke-width="1.300"/></svg>
<div style="left:466px;top:45px;width:51.500px;height:14px;border:1px dotted #333;box-sizing:border-box"></div>
<div class="pbtn" style="left:301px;top:483.5px;width:121.5px;height:27px;background:#e5e5e4;"></div>
<div class="pbtn" style="left:675px;top:483.5px;width:49px;height:27px;background:#e5e5e4;"></div>
<div class="pbtn" style="left:727.5px;top:483.5px;width:49px;height:27px;background:#e5e5e4;"></div>
<svg style="left:356px;top:485.5px" width="12" height="11" viewBox="0 0 12 11"><rect x="0" y="0" width="12" height="11" fill="#1f56d8"/><rect x="2" y="0" width="8" height="3" fill="#e83030"/><rect x="2" y="3" width="8" height="1.500" fill="#fff"/><rect x="3" y="7" width="6" height="4" fill="#f4f4f4"/><rect x="4" y="8" width="1.800" height="3" fill="#1f56d8"/></svg>
<svg style="left:693px;top:485.5px" width="11" height="11" viewBox="0 0 11 11"><circle cx="5.500" cy="5.500" r="5" fill="#f2f6ff" stroke="#3a6ad0" stroke-width="1.200"/><path d="M3.800 4.300c0-1.200.800-1.800 1.800-1.800s1.800.6 1.800 1.600c0 1.200-1.400 1.300-1.400 2.500" fill="none" stroke="#3050a0" stroke-width="1.100"/><circle cx="5.600" cy="8.300" r=".700" fill="#3050a0"/></svg>
<svg style="left:745.5px;top:485px" width="12.5" height="12" viewBox="0 0 12.5 12"><rect x=".5" y=".5" width="10" height="8" fill="#fff" stroke="#a8b0c0" stroke-width="1"/><rect x="1" y="1" width="9" height="1.500" fill="#c8d4ec"/><circle cx="9" cy="8.500" r="3.300" fill="#e02828"/><path d="M7.600 7.100l2.800 2.800M10.400 7.100l-2.800 2.800" stroke="#fff" stroke-width="1.100"/></svg>
<span class="t sb" id="t216" style="left:440.5px;top:3.8px;font-size:10.5px;transform:scaleX(0.934);font-weight:bold;">Datos del registro de control</span>
<span class="t tb" id="t217" style="left:330.5px;top:27.5px;font-size:10.5px;transform:scaleX(0.878);"><u>V</u>acaciones</span>
<span class="t tb" id="t218" style="left:403px;top:27.5px;font-size:10.5px;transform:scaleX(0.826);">S<u>a</u>lario</span>
<span class="t tb" id="t219" style="left:456px;top:27.5px;font-size:10.5px;transform:scaleX(0.842);"><u>A</u>utoliquidación</span>
<span class="t tb" id="t220" style="left:544px;top:27.5px;font-size:10.5px;transform:scaleX(0.837);">Interfaz c<u>o</u>ntable</span>
<span class="t tb" id="t221" style="left:634.5px;top:27.5px;font-size:10.5px;transform:scaleX(0.825);"><u>C</u>esantías</span>
<span class="t tb" id="t222" style="left:322px;top:43px;font-size:10.5px;transform:scaleX(0.802);">Prima</span>
<span class="t tb" id="t223" style="left:372.5px;top:43px;font-size:10.5px;transform:scaleX(0.813);">PILA</span>
<span class="t tb" id="t224" style="left:417.5px;top:43px;font-size:10.5px;transform:scaleX(0.801);">Parametros</span>
<span class="t tb" id="t225" style="left:488px;top:43px;font-size:10.5px;transform:scaleX(0.828);">Varios</span>
<span class="t tb" id="t226" style="left:537px;top:43px;font-size:10.5px;transform:scaleX(0.820);">Indemnizaciòn</span>
<span class="t cat" id="t227" style="left:325px;top:65.4px;font-size:10.2px;transform:scaleX(0.958);">IBL Ingreso Base Liquidación</span>
<span class="t gr" id="t228" style="left:325px;top:80.3px;font-size:10px;transform:scaleX(0.879);">Incapacidad IGE</span>
<span class="t gr" id="t229" style="left:542px;top:80.3px;font-size:10px;transform:scaleX(0.858);">Último IBC</span>
<span class="t gr" id="t230" style="left:325px;top:94.3px;font-size:10px;transform:scaleX(0.892);">Incapacidad IRL</span>
<span class="t gr" id="t231" style="left:542px;top:94.3px;font-size:10px;transform:scaleX(0.864);">Último IBC     (Ley)</span>
<span class="t gr" id="t232" style="left:325px;top:108.3px;font-size:10px;transform:scaleX(0.882);">Lic.No.Remunerada SLN</span>
<span class="t gr" id="t233" style="left:542px;top:108.3px;font-size:10px;transform:scaleX(0.861);">Salario</span>
<span class="t cat" id="t234" style="left:325px;top:121.4px;font-size:10.2px;transform:scaleX(0.947);">Liquidación de Contrato</span>
<span class="t gr" id="t235" style="left:325px;top:136.3px;font-size:10px;transform:scaleX(0.865);">Liquidar nomina pendiente</span>
<span class="t gr" id="t236" style="left:542px;top:136.3px;font-size:10px;transform:scaleX(0.860);">No</span>
<span class="t gr" id="t237" style="left:325px;top:150.3px;font-size:10px;transform:scaleX(0.874);">Observación Obligatoria</span>
<span class="t gr" id="t238" style="left:542px;top:150.3px;font-size:10px;transform:scaleX(0.898);">Si</span>
<span class="t cat" id="t239" style="left:325px;top:163.4px;font-size:10.2px;transform:scaleX(0.955);">Nómina Electrónica</span>
<span class="t gr" id="t240" style="left:325px;top:178.3px;font-size:10px;transform:scaleX(0.877);">Set de pruebas</span>
<span class="t gr" id="t241" style="left:542px;top:178.3px;font-size:10px;transform:scaleX(0.899);">SET DE PRUEBA</span>
<span class="t gr" id="t242" style="left:325px;top:192.3px;font-size:10px;transform:scaleX(0.884);">Id de Software</span>
<span class="t gr" id="t243" style="left:542px;top:192.3px;font-size:10px;transform:scaleX(0.891);">ID DEL SOFTWARE</span>
<span class="t gr" id="t244" style="left:325px;top:206.3px;font-size:10px;transform:scaleX(0.870);">Pin de software</span>
<span class="t gr" id="t245" style="left:542px;top:206.3px;font-size:10px;transform:scaleX(0.891);">PIN DEL SOFTWARE</span>
<span class="t cat" id="t246" style="left:337px;top:219.4px;font-size:10.2px;transform:scaleX(0.958);">Consecutivo documento para Nómina Electrónica</span>
<span class="t gr" id="t247" style="left:337px;top:234.3px;font-size:10px;transform:scaleX(0.864);">Soporte nómina</span>
<span class="t gr" id="t248" style="left:542px;top:234.3px;font-size:10px;transform:scaleX(0.944);">18</span>
<span class="t gr" id="t249" style="left:337px;top:248.3px;font-size:10px;transform:scaleX(0.873);">Nota Ajuste y eliminación</span>
<span class="t gr" id="t250" style="left:542px;top:248.3px;font-size:10px;transform:scaleX(0.899);">1</span>
<span class="t cat" id="t251" style="left:337px;top:261.4px;font-size:10.2px;transform:scaleX(0.956);">Prefijo documento para Nómina Electrónica</span>
<span class="t gr" id="t252" style="left:337px;top:276.3px;font-size:10px;transform:scaleX(0.864);">Soporte nómina</span>
<span class="t gr" id="t253" style="left:542px;top:276.3px;font-size:10px;transform:scaleX(0.900);">NI</span>
<span class="t gr" id="t254" style="left:337px;top:290.3px;font-size:10px;transform:scaleX(0.873);">Nota Ajuste y eliminación</span>
<span class="t gr" id="t255" style="left:542px;top:290.3px;font-size:10px;transform:scaleX(0.862);">NT</span>
<span class="t cat" id="t256" style="left:325px;top:303.4px;font-size:10.2px;transform:scaleX(0.950);">Portal del Empleado</span>
<span class="t gr" id="t257" style="left:325px;top:318.3px;font-size:10px;transform:scaleX(0.860);">Empresa usa Portal Del Empleado</span>
<span class="t gr" id="t258" style="left:542px;top:318.3px;font-size:10px;transform:scaleX(0.898);">Si</span>
<span class="t gr" id="t259" style="left:325px;top:332.3px;font-size:10px;transform:scaleX(0.874);">Mostrar certificado de ingreso y retenciones</span>
<span class="t gr" id="t260" style="left:542px;top:332.3px;font-size:10px;transform:scaleX(0.898);">Si</span>
<span class="t cat" id="t261" style="left:337px;top:345.4px;font-size:10.2px;transform:scaleX(0.958);">Desprendible de pago</span>
<span class="t gr" id="t262" style="left:337px;top:360.3px;font-size:10px;transform:scaleX(0.873);">Año inicial</span>
<span class="t gr" id="t263" style="left:542px;top:360.3px;font-size:10px;transform:scaleX(0.944);">2020</span>
<span class="t gr" id="t264" style="left:337px;top:374.3px;font-size:10px;transform:scaleX(0.865);">Mostrar Auxilio de Transporte</span>
<span class="t gr" id="t265" style="left:542px;top:374.3px;font-size:10px;transform:scaleX(0.860);">No</span>
<span class="t gr" id="t266" style="left:337px;top:388.3px;font-size:10px;transform:scaleX(0.858);">Mostrar solo periodo cerrados</span>
<span class="t gr" id="t267" style="left:542px;top:388.3px;font-size:10px;transform:scaleX(0.860);">No</span>
<span class="t tb" id="t268" style="left:318px;top:492.3px;font-size:10.5px;transform:scaleX(0.837);"><u>G</u>uardar configuración</span>
<span class="t tb" id="t269" style="left:686.5px;top:492.3px;font-size:10.5px;transform:scaleX(0.844);">A<u>y</u>uda</span>
<span class="t tb" id="t270" style="left:743.5px;top:492.3px;font-size:10.5px;transform:scaleX(0.785);"><u>S</u>alir</span>
<svg style="left:0;top:0" width="800" height="521" viewBox="0 0 800 521"><path fill="#ed1c24" fill-rule="evenodd" d="M0 0H107.4V45.9H0zM4.6 5.8H101.4V39.9H4.6z"/></svg>
<svg style="left:0;top:0" width="800" height="521" viewBox="0 0 800 521"><path fill="#ed1c24" fill-rule="evenodd" d="M119 119.5H266V147H119zM125 123.8H260.5V142H125z"/></svg>
<svg style="left:0;top:0" width="800" height="521" viewBox="0 0 800 521"><path fill="#ed1c24" fill-rule="evenodd" d="M303.7 145H603V172H303.7zM309.5 150H597V167.5H309.5z"/></svg>
</div></body></html>
